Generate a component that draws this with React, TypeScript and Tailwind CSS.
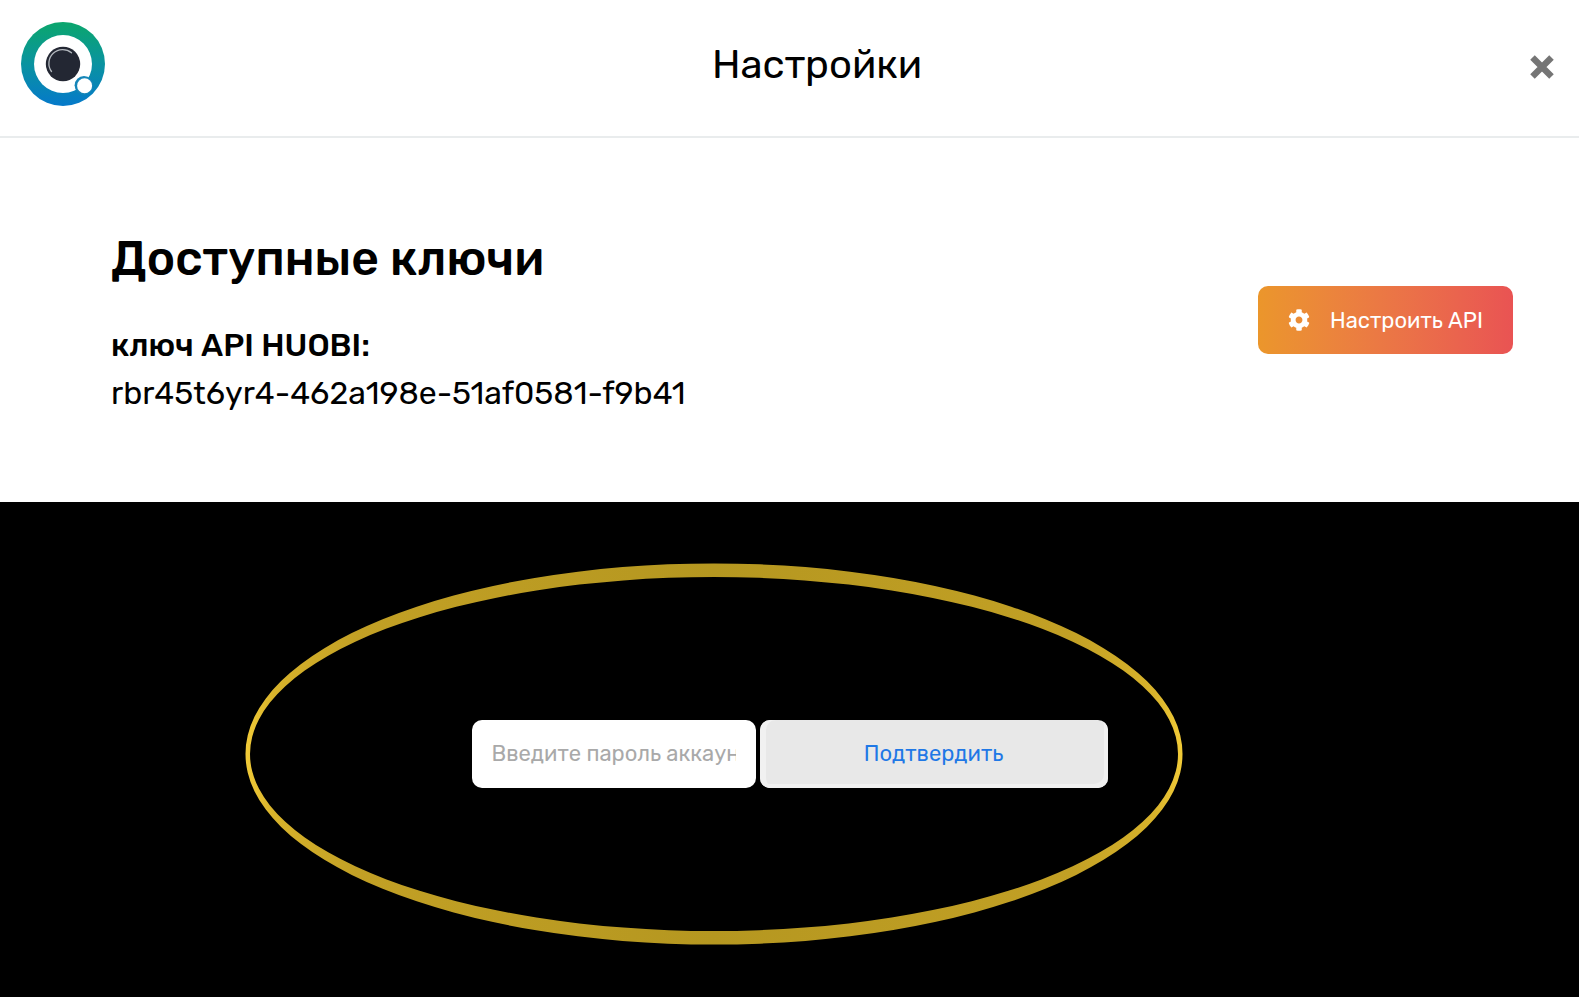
import { useState } from "react";
import { FaCog } from "react-icons/fa";

function Logo() {
  return (
    <svg viewBox="0 0 84 84" className="size-[84px]" role="img" aria-label="Логотип">
      <defs>
        <linearGradient id="ring" x1="0" y1="0" x2="0" y2="1">
          <stop offset="0" stopColor="#0ba66c" />
          <stop offset="0.5" stopColor="#0a93a0" />
          <stop offset="1" stopColor="#0579ca" />
        </linearGradient>
      </defs>
      <circle cx="42" cy="42" r="42" fill="url(#ring)" />
      <circle cx="42" cy="42" r="29" fill="#fff" />
      <circle cx="42" cy="42" r="17.2" fill="#232733" />
      <path d="M30.5 49.5A13.8 13.8 0 0 1 50.5 30.8" fill="none" stroke="#b4b9bf" strokeWidth="1.3" strokeLinecap="round" />
      <circle cx="63" cy="63.3" r="9.4" fill="#1585b8" />
      <circle cx="63.6" cy="63.8" r="7.5" fill="#fff" />
    </svg>
  );
}

function CloseIcon() {
  return (
    <svg viewBox="0 0 26 26" className="size-[26px]" aria-hidden="true">
      <path d="M3.5 3.5L22.5 22.5M22.5 3.5L3.5 22.5" stroke="#757575" strokeWidth="6.4" />
    </svg>
  );
}

function Highlight() {
  return (
    <svg
      viewBox="0 0 938 382"
      aria-hidden="true"
      className="pointer-events-none absolute top-[61px] left-1/2 w-[938px] -translate-x-[545px]"
    >
      <defs>
        <linearGradient id="gold" x1="0" y1="0" x2="1" y2="0">
          <stop offset="0" stopColor="#f2cb38" />
          <stop offset="0.03" stopColor="#d8b32b" />
          <stop offset="0.12" stopColor="#c2a025" />
          <stop offset="0.5" stopColor="#b59720" />
          <stop offset="0.88" stopColor="#c2a025" />
          <stop offset="0.97" stopColor="#d8b32b" />
          <stop offset="1" stopColor="#f2cb38" />
        </linearGradient>
      </defs>
      <path
        fill="url(#gold)"
        fillRule="evenodd"
        d="M0.5 191a468.5 190.5 0 1 0 937 0a468.5 190.5 0 1 0 -937 0zM5 191a464 177 0 1 1 928 0a464 177 0 1 1 -928 0z"
      />
    </svg>
  );
}

export default function App() {
  const [password, setPassword] = useState("");

  return (
    <div className="flex min-h-screen flex-col bg-black font-['Rubik','Inter',sans-serif] text-black">
      <header className="flex items-start justify-between border-b-2 border-[#e9eced] bg-white pt-[22px] pr-6 pb-[30px] pl-[21px]">
        <Logo />
        <h1 className="pt-[13px] text-[40px] leading-[60px]">Настройки</h1>
        <button type="button" aria-label="Закрыть" className="mt-8">
          <CloseIcon />
        </button>
      </header>

      <main className="flex grow flex-col">
        <section className="flex items-start justify-between bg-white pt-[91px] pr-[66px] pb-[85px] pl-[111px]">
          <div>
            <h2 className="text-5xl leading-[60px] font-medium">Доступные ключи</h2>
            <h3 className="mt-8 text-[32px] leading-[48px] font-medium">ключ API HUOBI:</h3>
            <p className="text-[32px] leading-[48px]">rbr45t6yr4-462a198e-51af0581-f9b41</p>
          </div>
          <button
            type="button"
            className="mt-[57px] flex h-[68px] w-[255px] items-center justify-center gap-5 rounded-[10px] bg-linear-to-r from-[#eb962b] to-[#e95353] text-[22px] text-white"
          >
            <FaCog className="size-[22px]" />
            Настроить API
          </button>
        </section>

        <section className="relative flex grow items-center justify-center bg-black pt-2">
          <Highlight />
          <form className="flex gap-1" onSubmit={(e) => e.preventDefault()}>
            <input
              type="text"
              aria-label="Введите пароль аккаунта"
              placeholder="Введите пароль аккаунта"
              value={password}
              onChange={(e) => setPassword(e.target.value)}
              className="h-[68px] w-[284px] rounded-[10px] bg-white px-5 text-[22px] outline-none placeholder:text-[#a9a9a9]"
            />
            <button
              type="submit"
              className="h-[68px] w-[348px] rounded-[10px] bg-[#e8e8e8] text-[22px] text-[#1f78e6] shadow-[inset_6px_0_0_#f1f1f1,inset_-4px_-4px_0_#f1f1f1]"
            >
              Подтвердить
            </button>
          </form>
        </section>
      </main>
    </div>
  );
}
